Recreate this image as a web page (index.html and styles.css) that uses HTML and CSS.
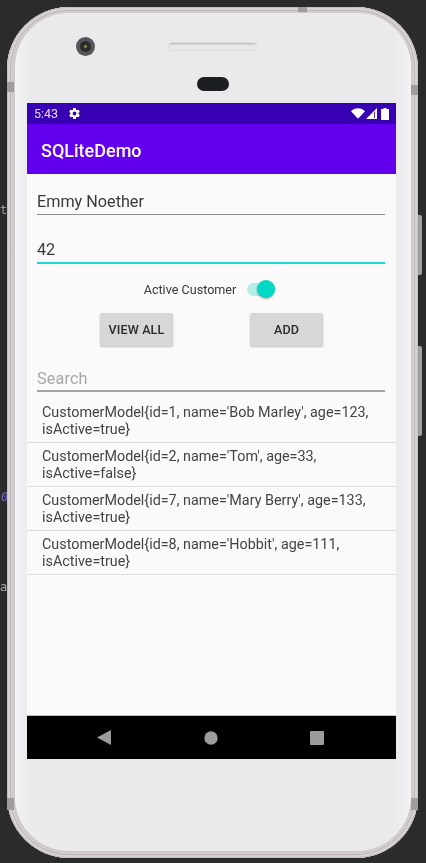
FILE: index.html
```html
<!DOCTYPE html>
<html lang="en">
<head>
<meta charset="utf-8">
<title>SQLiteDemo</title>
<link rel="stylesheet" href="styles.css">
</head>
<body>
<span class="code-frag frag-t">t</span>
<span class="code-frag frag-o">0</span>
<span class="code-frag frag-a">a</span>
<div class="side-btn btn-power"></div>
<div class="side-btn btn-volume"></div>
<div class="phone">
  <i class="band band-top"></i>
  <i class="band band-left-top"></i>
  <i class="band band-right-top"></i>
  <i class="band band-left-bottom"></i>
  <i class="band band-right-bottom"></i>
  <div class="bezel">
    <div class="bezel-row">
      <div class="camera"><div class="lens"></div></div>
      <div class="speaker"></div>
    </div>
    <div class="sensor"></div>
  </div>
  <div class="screen">
    <div class="status">
      <span class="clock">5:43</span>
      <svg class="gear" viewBox="0 0 24 24" width="13" height="13"><path fill="#fff" d="M19.4 13c.04-.33.07-.66.07-1s-.03-.67-.07-1l2.1-1.65c.2-.15.25-.42.13-.64l-2-3.46c-.12-.22-.39-.3-.61-.22l-2.49 1c-.52-.4-1.08-.73-1.69-.98l-.38-2.65A.49.49 0 0 0 14 2h-4c-.25 0-.46.18-.49.42l-.38 2.65c-.61.25-1.17.59-1.69.98l-2.49-1c-.23-.09-.49 0-.61.22l-2 3.46c-.13.22-.07.49.12.64L4.57 11c-.04.33-.07.66-.07 1s.03.67.07 1l-2.11 1.65c-.19.15-.25.42-.12.64l2 3.46c.12.22.39.3.61.22l2.49-1c.52.4 1.08.73 1.69.98l.38 2.65c.03.24.24.42.49.42h4c.25 0 .46-.18.49-.42l.38-2.65c.61-.25 1.17-.59 1.69-.98l2.49 1c.23.09.49 0 .61-.22l2-3.46c.12-.22.07-.49-.13-.64zM12 15.500a3.500 3.500 0 1 1 0-7 3.500 3.500 0 0 1 0 7z"/></svg>
      <span class="status-gap"></span>
      <svg class="wifi" viewBox="0 0 14 11" width="14" height="11"><path fill="#fff" d="M0 3.200C1.800 1.300 4.200.2 7 .2s5.200 1.100 7 3L7 10.800z"/></svg>
      <svg class="signal" viewBox="0 0 11 11" width="11" height="11"><path fill="#fff" d="M11 0v11H0z"/><path fill="#5a30c0" d="M8 3.800h1v6.200H8z"/></svg>
      <svg class="battery" viewBox="0 0 8 12" width="8" height="12"><path fill="#fff" d="M2.500 0h3v1H7.500a.5.5 0 0 1 .5.500V11.500a.5.5 0 0 1-.5.500H.5a.5.5 0 0 1-.5-.5V1.500a.5.5 0 0 1 .5-.5H2.500z"/></svg>
    </div>
    <div class="appbar">SQLiteDemo</div>
    <main class="content">
      <div class="field field-name">Emmy Noether</div>
      <div class="field field-age">42</div>
      <div class="switch-row">
        <span class="switch-label">Active Customer</span>
        <span class="switch"><span class="track"></span><span class="thumb"></span></span>
      </div>
      <div class="buttons">
        <div class="btn">VIEW ALL</div>
        <div class="btn">ADD</div>
      </div>
      <div class="field field-search">Search</div>
      <ul class="list">
        <li>CustomerModel{id=1, name='Bob Marley', age=123, isActive=true}</li>
        <li>CustomerModel{id=2, name='Tom', age=33, isActive=false}</li>
        <li>CustomerModel{id=7, name='Mary Berry', age=133, isActive=true}</li>
        <li>CustomerModel{id=8, name='Hobbit', age=111, isActive=true}</li>
      </ul>
    </main>
    <div class="nav">
      <svg viewBox="0 0 14 15" width="14" height="15"><path fill="#9c9c9c" d="M14 0v15L0 7.500z"/></svg>
      <svg viewBox="0 0 14 14" width="14" height="14"><circle fill="#9c9c9c" cx="7" cy="7" r="6.700"/></svg>
      <svg viewBox="0 0 14 14" width="14" height="14"><rect fill="#9c9c9c" width="14" height="14" rx="1"/></svg>
    </div>
  </div>
</div>
</body>
</html>
```

FILE: styles.css
```css
* { box-sizing: border-box; }
html, body { margin: 0; height: 100%; }
body {
  position: relative;
  width: 426px;
  height: 863px;
  overflow: hidden;
  background: #2b2b2b;
  font-family: Roboto, "Liberation Sans", sans-serif;
  padding: 7px 0 0 7px;
}
.code-frag {
  position: absolute;
  left: 0;
  font: 12px "DejaVu Sans Mono", monospace;
  color: #a9b7c6;
  filter: blur(.3px);
}
.frag-t { top: 203px; color: #8f9cab; }
.frag-o { top: 490px; left: 1px; font-style: italic; color: #7a68b8; }
.frag-a { top: 580px; color: #a9a9a9; }
.side-btn {
  position: absolute;
  left: 416px;
  width: 6px;
  background: #a3a1a1;
  border-radius: 0 2px 2px 0;
}
.btn-power { top: 215px; height: 60px; }
.btn-volume { top: 346px; height: 90px; }
.phone {
  position: relative;
  width: 411px;
  height: 851px;
  border-radius: 62px;
  padding: 6px 7px 7px 8px;
  background: #cfc8ca;
  box-shadow: inset 0 0 0 1px #c6bfc1, inset 0 0 0 3px #d8d3d4, inset 0 0 0 4px #bab3b5, inset 0 0 0 5px #d8d3d4;
  filter: blur(.35px);
}
.band { position: absolute; background: #a19b9d; }
.band-top { top: 0; left: 291px; width: 9px; height: 5px; }
.band-left-top { top: 75px; left: 0; width: 7px; height: 10px; }
.band-right-top { top: 78px; right: 0; width: 7px; height: 10px; }
.band-left-bottom { top: 791px; left: 0; width: 7px; height: 12px; }
.band-right-bottom { top: 791px; right: 0; width: 7px; height: 12px; }
.phone::before {
  content: "";
  position: absolute;
  inset: 6px 7px 7px 8px;
  border-radius: 54px;
  background: linear-gradient(90deg, #f3f3f5, #eaeaec 4%, #eaeaec 96%, #f3f3f5);
}
.bezel, .screen { position: relative; }
.bezel {
  height: 90px;
  display: flex;
  flex-direction: column;
  align-items: center;
  padding-top: 24px;
}
.bezel-row {
  display: flex;
  align-items: center;
  width: 100%;
  padding-left: 61px;
  gap: 73px;
}
.camera {
  width: 19px;
  height: 19px;
  border-radius: 50%;
  background: #55565a;
  display: flex;
  align-items: center;
  justify-content: center;
}
.lens {
  width: 11px;
  height: 11px;
  border-radius: 50%;
  background: radial-gradient(circle, #8a7a3a 0 14%, #2b2b2b 28% 60%, #3e3e40 100%);
}
.speaker {
  width: 89px;
  height: 9px;
  border-radius: 4px;
  background: linear-gradient(#b5babd, #e6e7e8 35%, #e6e7e9);
  border: 1px solid #dcdee0;
}
.sensor {
  width: 32px;
  height: 14px;
  margin-top: 21px;
  border-radius: 7px;
  background: #1d1e22;
}
.screen {
  width: 369px;
  height: 656px;
  margin-left: 12px;
  display: flex;
  flex-direction: column;
  background: #fafafa;
}
.status {
  height: 21px;
  background: #3700b3;
  display: flex;
  align-items: center;
  padding: 0 7px;
  color: #e6dff5;
  font-size: 12.5px;
}
.gear { margin-left: 10px; }
.status-gap { flex: 1; }
.wifi { margin-right: 1px; }
.signal { margin-right: 4px; }
.appbar {
  height: 50px;
  background: #6200ee;
  color: #fff;
  font-size: 18px;
  font-weight: 500;
  display: flex;
  align-items: center;
  padding: 2px 0 0 14px;
}
.content {
  flex: 1;
  padding-top: 15px;
  display: flex;
  flex-direction: column;
}
.field {
  margin: 0 11px 0 10px;
  height: 26px;
  font-size: 16.2px;
  line-height: 25px;
  color: #3a3a3a;
  border-bottom: 1px solid #8f8f8f;
}
.field-age {
  margin-top: 22px;
  height: 27px;
  line-height: 25px;
  border-bottom: 2px solid #1cd9cf;
}
.switch-row {
  margin-top: 13px;
  height: 25px;
  display: flex;
  align-items: center;
  justify-content: center;
  gap: 11px;
  padding-right: 4px;
}
.switch-label { font-size: 12.6px; color: #3a3a3a; }
.switch { position: relative; width: 28px; height: 20px; display: flex; align-items: center; }
.track {
  width: 25px;
  height: 13px;
  border-radius: 7px;
  background: #b6ede9;
}
.thumb {
  position: absolute;
  right: 0;
  top: 0;
  width: 18px;
  height: 18px;
  border-radius: 50%;
  background: #03d8c5;
  box-shadow: 0 1px 2px rgba(0, 0, 0, .35);
}
.buttons {
  margin-top: 11px;
  padding-left: 73px;
  display: flex;
  gap: 77px;
}
.btn {
  width: 73px;
  height: 33px;
  background: #d6d7d7;
  border-radius: 2px;
  box-shadow: 0 1px 2px rgba(0, 0, 0, .25);
  color: #2b2b2b;
  font-size: 12.6px;
  font-weight: 500;
  letter-spacing: .1px;
  display: flex;
  align-items: center;
  justify-content: center;
}
.field-search {
  margin-top: 20px;
  height: 26px;
  color: #a8a8a8;
  letter-spacing: .15px;
  border-bottom: 2px solid #a3a3a3;
}
.list {
  list-style: none;
  margin: 7px 0 0;
  padding: 0;
}
.list li {
  height: 44px;
  padding: 5px 10px 0 15px;
  font-size: 14.35px;
  line-height: 17px;
  color: #444;
  border-bottom: 1px solid #dcdcdc;
}
.nav {
  height: 44px;
  background: #000;
  border-top: 1px solid #bdbdbd;
  display: flex;
  align-items: center;
  padding-left: 70px;
  gap: 92.5px;
}
```
